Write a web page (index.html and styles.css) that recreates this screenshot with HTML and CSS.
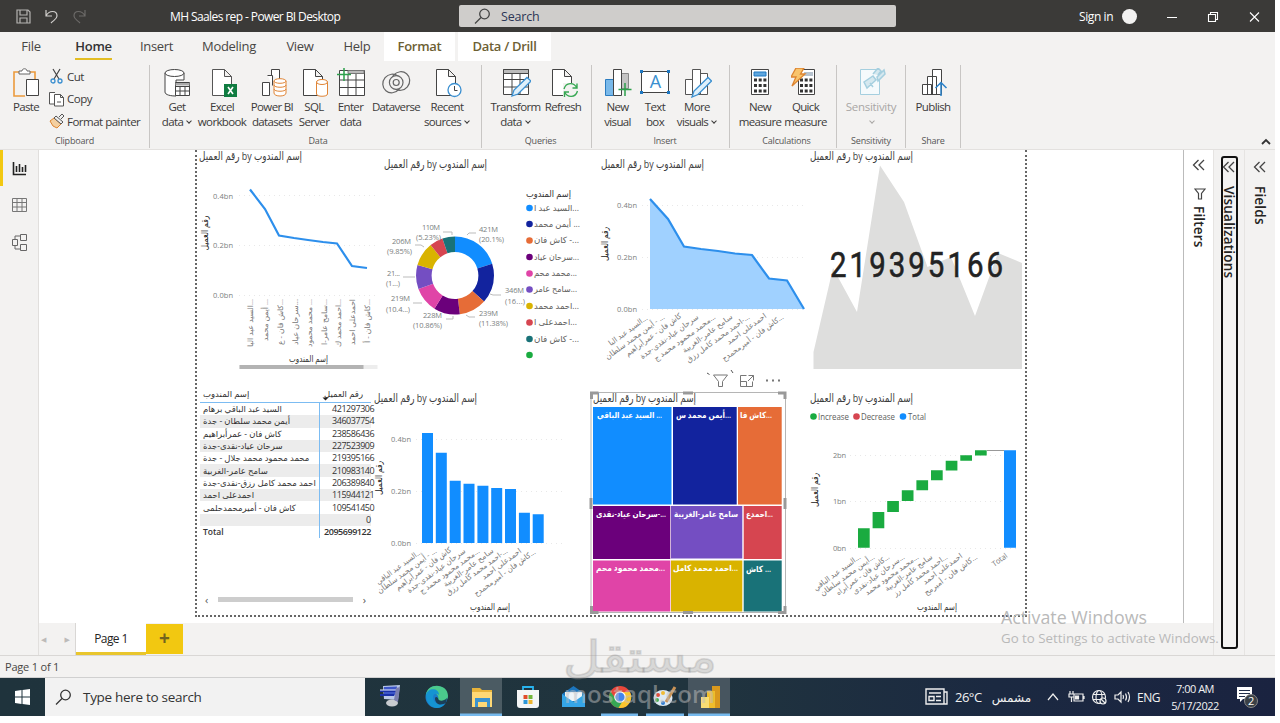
FILE: index.html
```
<!DOCTYPE html>
<html lang="en">
<head>
    <meta charset="UTF-8">
    <meta name="viewport" content="width=device-width, initial-scale=1.0">
    <title>MH Saales rep - Power BI Desktop</title>
    <link rel="stylesheet" href="styles.css">
</head>
<body>
    <div class="desktop">
        <header class="titlebar">
            <div class="quick-access">
                <svg width="100" height="32" viewBox="0 0 100 32" fill="none" stroke="#b5b3b1" stroke-width="1.2">
                    <path d="M17 10h11l2 2v11H17zM20 10v5h7v-5M20 23v-5h7v5"/>
                    <path d="M46 10v6h6M46 16c3-6 11-6 11 0 0 3-3 4-6 7" stroke="#d0cecc"/>
                    <path d="M85 10v6h-6M85 16c-3-6-11-6-11 0 0 3 3 4 6 7" stroke="#6c6a68"/>
                </svg>
            </div>
            <div class="app-title">MH Saales rep - Power BI Desktop</div>
            <div class="search-box">
                <svg width="17" height="17" viewBox="0 0 17 17" fill="none" stroke="#444" stroke-width="1.3"><circle cx="10.5" cy="6" r="4.8"/><path d="M7 9.5L1 15.5"/></svg>
                <span>Search</span>
            </div>
            <div class="sign-in">Sign in</div>
            <div class="avatar"></div>
            <svg class="window-buttons" width="120" height="32" viewBox="1155 0 120 32" fill="none" stroke="#fff" stroke-width="1.1">
                <path d="M1167 17.5h10M1250 12.500l9 9M1259 12.500l-9 9"/>
                <path d="M1208.500 14.500h7v7h-7zM1210.500 14.500v-2h7v7h-2"/>
            </svg>
        </header>

        <nav class="tabs">
            <span class="tab w-file">File</span>
            <span class="tab w-home active"><b>Home</b></span>
            <span class="tab w-insert">Insert</span>
            <span class="tab w-modeling">Modeling</span>
            <span class="tab w-view">View</span>
            <span class="tab w-help">Help</span>
            <span class="tab context w-format">Format</span>
            <span class="tab context w-drill">Data / Drill</span>
        </nav>

        <section class="ribbon">
            <div class="group g-clipboard">
                <div class="tools">
                    <div class="tool w52">
                        <svg width="30" height="30" viewBox="0 0 30 30" fill="none"><path d="M8 4H3v24h11M19 4h5v7" stroke="#ec9a3c" stroke-width="1.6"/><path d="M8 6V3h3c0-3 5-3 5 0h3v3z" fill="#fff" stroke="#666"/><path d="M15.500 11.500h12v16h-12z" fill="#fff" stroke="#444"/></svg>
                        <span>Paste</span>
                    </div>
                    <div class="small-tools">
                        <div><svg width="16" height="16" viewBox="0 0 16 16" fill="none"><path d="M4 1l6 10M11 1L5 11" stroke="#444" stroke-width="1.200"/><circle cx="4" cy="13" r="2" stroke="#3a8fd0" stroke-width="1.300"/><circle cx="11" cy="13" r="2" stroke="#3a8fd0" stroke-width="1.300"/></svg>Cut</div>
                        <div><svg width="16" height="16" viewBox="0 0 16 16" fill="#fff" stroke="#555"><path d="M6 13H.5V1.500H6"/><path d="M5.500 3.500h6l3 3v8.500h-9zM11.500 3.500v3h3M8 11h4"/></svg>Copy</div>
                        <div><svg width="16" height="16" viewBox="0 0 16 16"><path d="M1 8l4-3 7 6-4 4-4-2z" fill="#f3cfa0" stroke="#dd8430"/><path d="M5 5l2-2 7 6-2 2zM10 4l3-3 2 2-3 3" fill="#eee" stroke="#555"/></svg>Format painter</div>
                    </div>
                </div>
                <div class="caption">Clipboard</div>
            </div>

            <div class="group g-data">
                <div class="tools">
                    <div class="tool w44">
                        <svg width="30" height="30" viewBox="0 0 30 30" fill="#fff" stroke="#444"><path d="M3 5v19c0 3 6 4 11 4V12h8V5"/><ellipse cx="12.500" cy="5" rx="9.500" ry="3.500"/><path d="M13.500 14.500h14v13h-14zM13.500 18.500h14M13.500 23h14M18 18v10M23 18v10"/><path d="M13.500 15h14v2.500h-14z" fill="#aaa" stroke="none"/></svg>
                        <span>Get<br>data<i class="chev"></i></span>
                    </div>
                    <div class="tool w46">
                        <svg width="30" height="30" viewBox="0 0 30 30" fill="#fff" stroke="#555"><path d="M5.500 1.500h12l7 7v19h-19zM17.500 1.500v7h7"/><path d="M17 16h13v13H17z" fill="#107c41" stroke="none"/><path d="M21 19l5 7M26 19l-5 7" stroke="#fff" stroke-width="1.600"/></svg>
                        <span>Excel<br>workbook</span>
                    </div>
                    <div class="tool w54">
                        <svg width="30" height="30" viewBox="0 0 30 30" fill="#fff" stroke="#444"><path d="M5.500 14.500h7v13h-7zM10.500 7.500h5v10M14.500 7V1.500h8V12"/><path d="M17 13v12c0 4 12 4 12 0V13z" stroke="#e08536"/><ellipse cx="23" cy="13" rx="6" ry="2.300" stroke="#e08536"/><path d="M17 17c0 3 12 3 12 0M17 21c0 3 12 3 12 0" stroke="#e08536" fill="none"/></svg>
                        <span>Power BI<br>datasets</span>
                    </div>
                    <div class="tool w30">
                        <svg width="30" height="30" viewBox="0 0 30 30" fill="#fff" stroke="#444"><path d="M4.500 1.500h12l7 7v19h-19zM16.500 1.500v7h7"/><path d="M17.500 14v12c0 3 11 3 11 0V14z" stroke="#e08536"/><ellipse cx="23" cy="14" rx="5.500" ry="2.500" stroke="#e08536"/></svg>
                        <span>SQL<br>Server</span>
                    </div>
                    <div class="tool w43">
                        <svg width="30" height="30" viewBox="0 0 30 30" fill="#fff" stroke="#444"><path d="M3.500 2.500h25v25h-25zM3.500 12h25M3.500 19.500h25M12 6v21M20 6v21"/><path d="M12 2.500h16v3H12z" fill="#bbb" stroke="#777"/><path d="M8 0v13M1 6.500h14" stroke="#2da04b" stroke-width="1.500"/></svg>
                        <span>Enter<br>data</span>
                    </div>
                    <div class="tool w48">
                        <svg width="30" height="30" viewBox="0 0 30 30" fill="none" stroke="#666" stroke-width="1.200"><ellipse cx="11" cy="15.500" rx="9.500" ry="9" transform="rotate(-50 11 15.500)"/><ellipse cx="19.500" cy="13" rx="9.500" ry="9" transform="rotate(-50 19.500 13)"/><circle cx="15.200" cy="14.500" r="6.800" fill="#f3f2f1"/><circle cx="15.200" cy="14.500" r="3"/></svg>
                        <span>Dataverse</span>
                    </div>
                    <div class="tool w54">
                        <svg width="30" height="30" viewBox="0 0 30 30" fill="#fff" stroke="#444"><path d="M4.500 1.500h12l7 7v19h-19zM16.500 1.500v7h7"/><circle cx="22.500" cy="22" r="6.500" stroke="#3a8fd0" stroke-width="1.300"/><path d="M22.500 18v4.500h3" fill="none"/></svg>
                        <span>Recent<br>sources<i class="chev"></i></span>
                    </div>
                </div>
                <div class="caption">Data</div>
            </div>

            <div class="group g-queries">
                <div class="tools">
                    <div class="tool w51">
                        <svg width="30" height="30" viewBox="0 0 30 30" fill="#fff" stroke="#444"><path d="M2.500 1.500h25v25h-25zM2.500 11.500h25M2.500 19h25M11 5v21M19 5v21"/><path d="M2.500 1.500h25v4h-25z" fill="#bbb"/><path d="M11 28l2-6L26 9.500l4 3.500L17 26z" fill="#dff0fb" stroke="#3a8fd0" stroke-width="1.300"/></svg>
                        <span>Transform<br>data<i class="chev"></i></span>
                    </div>
                    <div class="tool w44">
                        <svg width="30" height="30" viewBox="0 0 30 30" fill="#fff" stroke="#444"><path d="M4.500 1.500h12l7 7v19h-19zM16.500 1.500v7h7"/><path d="M15 15h15v15H15z" fill="#f3f2f1" stroke="none"/><path d="M16 21c2-7 10-7 13-1M29 15.500V20h-4.500M29.500 23c-2 7-10 7-13 1M16.500 29v-5H21" fill="none" stroke="#37a853" stroke-width="1.400"/></svg>
                        <span>Refresh</span>
                    </div>
                </div>
                <div class="caption">Queries</div>
            </div>

            <div class="group g-insert">
                <div class="tools">
                    <div class="tool w33">
                        <svg width="30" height="30" viewBox="0 0 30 30" fill="#fff"><path d="M2.500 11.500h8v16h-8z" fill="#79b9ea" stroke="#2b7cc0"/><path d="M18.500 5.500h7v15h-7z" fill="#c4c4c4" stroke="#888"/><path d="M10.500 1.500h8v26h-8z" stroke="#444"/><path d="M22 15v13M15.500 21.500h13" stroke="#2da04b" stroke-width="1.500"/></svg>
                        <span>New<br>visual</span>
                    </div>
                    <div class="tool w42">
                        <svg width="30" height="30" viewBox="0 0 30 30"><path d="M1.500 3.500h27v21h-27z" fill="#fff" stroke="#444"/><path d="M0 2h3v3H0zM27 2h3v3h-3zM0 23h3v3H0zM27 23h3v3h-3z" fill="#1e78c2"/><text x="15" y="20" text-anchor="middle" font-size="18" fill="#3a8fd0">A</text></svg>
                        <span>Text<br>box</span>
                    </div>
                    <div class="tool w42">
                        <svg width="30" height="30" viewBox="0 0 30 30" fill="#fff" stroke="#555"><path d="M3.500 11.500h7v15h-7zM18.500 5.500h7v21h-7zM10.500 1.500h8v25h-8z"/><path d="M10 29l2-6L26 9.500l3.500 3.500L16 26.500z" fill="#dff0fb" stroke="#3a8fd0" stroke-width="1.300"/></svg>
                        <span>More<br>visuals<i class="chev"></i></span>
                    </div>
                </div>
                <div class="caption">Insert</div>
            </div>

            <div class="group g-calc">
                <div class="tools">
                    <div class="tool w46">
                        <svg width="30" height="30" viewBox="0 0 30 30"><path d="M6.500 1.500h17v25h-17z" fill="#fff" stroke="#444"/><path d="M9 4h12v4H9z" fill="#5ea6de" stroke="#1e78c2"/><path d="M9 12h12.500M9 17.500h12.500M9 23h12.500" stroke="#333" stroke-width="3" stroke-dasharray="3 1.700"/></svg>
                        <span>New<br>measure</span>
                    </div>
                    <div class="tool w45">
                        <svg width="30" height="30" viewBox="0 0 30 30"><path d="M7.500 1.500h16v25h-16z" fill="#fff" stroke="#444"/><path d="M13 4h9v4h-9z" fill="#b7c3cf"/><path d="M9 12h12.500M9 17.500h12.500M9 23h12.500" stroke="#333" stroke-width="3" stroke-dasharray="3 1.700"/><path d="M5 0h8L9.500 6H14L1 18l4-9H0z" fill="#f8c46c" stroke="#dd8430" stroke-width="1.300"/></svg>
                        <span>Quick<br>measure</span>
                    </div>
                </div>
                <div class="caption">Calculations</div>
            </div>

            <div class="group g-sens">
                <div class="tools">
                    <div class="tool w68 disabled">
                        <svg width="30" height="30" viewBox="0 0 30 30" fill="#f5fafc" stroke="#a5cfdf"><path d="M4.500 1.500h19v25h-19z"/><path d="M8 14l9-6 3 4-9 8zM17 6l5-6 3 3-3 4M21 9l7-7 1 4-7 7zM14 15l3 4" fill="#d5e8ef" stroke-width="1.500"/></svg>
                        <span>Sensitivity<br><i class="chev"></i></span>
                    </div>
                </div>
                <div class="caption">Sensitivity</div>
            </div>

            <div class="group g-share">
                <div class="tools">
                    <div class="tool w54">
                        <svg width="30" height="30" viewBox="0 0 30 30" fill="#fff" stroke="#444"><path d="M14.500 1.500h9v25h-9zM9.500 8.500h9v18h-9zM4.500 16.500h9v10h-9z"/><path d="M23 28V15M17.500 20l5.500-5.500 5.500 5.500" stroke="#2b82c9" fill="none" stroke-width="1.500"/></svg>
                        <span>Publish</span>
                    </div>
                </div>
                <div class="caption">Share</div>
            </div>
            <svg class="collapse" width="10" height="7" viewBox="0 0 10 7" fill="none" stroke="#333" stroke-width="1.800"><path d="M1 6l4-4 4 4"/></svg>
        </section>

        <main class="workspace">
            <aside class="rail">
                <svg width="38" height="120" viewBox="0 150 38 120" fill="none">
                    <path d="M0 150h3v36H0z" fill="#f2c811"/>
                    <path d="M13.500 162v12.500H26M16.500 166v6M19.500 164v8M22.500 167v5M25.500 165v7" stroke="#222" stroke-width="1.600"/>
                    <path d="M12.500 198.500h14v13h-14zM12.500 202.500h14M12.500 207h14M17 199v12M22 199v12" stroke="#777"/>
                    <path d="M12.500 239.500h5v6h-5zM20.500 234.500h6v6h-6zM20.500 244.500h6v6h-6zM15 239v-3h5M15 246v3h5" stroke="#666"/>
                </svg>
            </aside>

            <div class="editor">
                <div class="canvas">
                    <div class="report">
                        <div class="report-row top">
                            <!-- line chart -->
                            <svg class="visual" width="184" height="230" viewBox="196 150 184 230">
                                <text class="title" x="199" y="160" textLength="103" lengthAdjust="spacingAndGlyphs">رقم العميل by إسم المندوب</text>
                                <path class="grid" d="M239 195.500h137M239 245.500h137M239 295.500h137"/>
                                <text class="axis" x="213" y="199" textLength="20">0.4bn</text>
                                <text class="axis" x="213" y="248" textLength="20">0.2bn</text>
                                <text class="axis" x="213" y="298" textLength="20">0.0bn</text>
                                <text class="axis-title" transform="translate(208 233) rotate(-90)" text-anchor="middle" textLength="35" lengthAdjust="spacingAndGlyphs">رقم العميل</text>
                                <path d="M250 189.500L265 209L279 235.500L294 238L308 240L323 242L337 243.500L352 266L367 268" fill="none" stroke="#2d8fec" stroke-width="2.200"/>
                                <g class="cat" text-anchor="end">
                                    <text transform="translate(253 299) rotate(-90)" textLength="48" lengthAdjust="spacingAndGlyphs">السيد عبد البا...</text>
                                    <text transform="translate(268 299) rotate(-90)" textLength="42" lengthAdjust="spacingAndGlyphs">أيمن محمد ...</text>
                                    <text transform="translate(283 299) rotate(-90)" textLength="46" lengthAdjust="spacingAndGlyphs">كاش فان - ع...</text>
                                    <text transform="translate(298 299) rotate(-90)" textLength="46" lengthAdjust="spacingAndGlyphs">سرحان عياد...</text>
                                    <text transform="translate(312 299) rotate(-90)" textLength="48" lengthAdjust="spacingAndGlyphs">محمد محمود ...</text>
                                    <text transform="translate(327 299) rotate(-90)" textLength="46" lengthAdjust="spacingAndGlyphs">سامح عامر-ا...</text>
                                    <text transform="translate(341 299) rotate(-90)" textLength="48" lengthAdjust="spacingAndGlyphs">احمد محمد ك...</text>
                                    <text transform="translate(355 299) rotate(-90)" textLength="46" lengthAdjust="spacingAndGlyphs">احمدعلى احمد</text>
                                    <text transform="translate(370 299) rotate(-90)" textLength="44" lengthAdjust="spacingAndGlyphs">كاش فان - أ...</text>
                                </g>
                                <text class="label" x="289" y="362" textLength="39" lengthAdjust="spacingAndGlyphs">إسم المندوب</text>
                                <path d="M239.500 365h138v4h-138z" fill="#ededed"/><path d="M239.500 365h124v4h-124z" fill="#b3b3b3"/>
                            </svg>

                            <!-- donut -->
                            <svg class="visual" width="210" height="230" viewBox="380 150 210 230">
                                <text class="title" x="384" y="168" textLength="103" lengthAdjust="spacingAndGlyphs">رقم العميل by إسم المندوب</text>
                                <g transform="rotate(-90 455 275.500)" fill="none" stroke-width="15.600">
                                    <circle cx="455" cy="275.500" r="31.200" pathLength="100" stroke="#118dff" stroke-dasharray="20.100 100"/>
                                    <circle cx="455" cy="275.500" r="31.200" pathLength="100" stroke="#12239e" stroke-dasharray="16.510 100" stroke-dashoffset="-20.100"/>
                                    <circle cx="455" cy="275.500" r="31.200" pathLength="100" stroke="#e66c37" stroke-dasharray="11.380 100" stroke-dashoffset="-36.610"/>
                                    <circle cx="455" cy="275.500" r="31.200" pathLength="100" stroke="#6b007b" stroke-dasharray="10.860 100" stroke-dashoffset="-47.990"/>
                                    <circle cx="455" cy="275.500" r="31.200" pathLength="100" stroke="#e044a7" stroke-dasharray="10.470 100" stroke-dashoffset="-58.850"/>
                                    <circle cx="455" cy="275.500" r="31.200" pathLength="100" stroke="#744ec2" stroke-dasharray="10.070 100" stroke-dashoffset="-69.320"/>
                                    <circle cx="455" cy="275.500" r="31.200" pathLength="100" stroke="#d9b300" stroke-dasharray="9.850 100" stroke-dashoffset="-79.390"/>
                                    <circle cx="455" cy="275.500" r="31.200" pathLength="100" stroke="#d64550" stroke-dasharray="5.530 100" stroke-dashoffset="-89.240"/>
                                    <circle cx="455" cy="275.500" r="31.200" pathLength="100" stroke="#197278" stroke-dasharray="5.230 100" stroke-dashoffset="-94.770"/>
                                </g>
                                <path d="M467 235l2-2h7M490 294l3 1h8M466 315l3 2h6M453 316v3h-7M422 303h-9M415 277h-12M424 247l-3-2h-6M452 235v-3h-9" fill="none" stroke="#bbb"/>
                                <g class="axis">
                                    <text x="479" y="232" textLength="19">421M</text><text x="479" y="242" textLength="25">(20.1%)</text>
                                    <text x="505" y="293" textLength="19">346M</text><text x="505" y="304" textLength="20">(16...)</text>
                                    <text x="479" y="316" textLength="19">239M</text><text x="479" y="326" textLength="29">(11.38%)</text>
                                    <text x="423" y="318" textLength="19">228M</text><text x="413" y="328" textLength="29">(10.86%)</text>
                                    <text x="391" y="301" textLength="19">219M</text><text x="386" y="312" textLength="24">(10.4...)</text>
                                    <text x="387" y="276" textLength="13">21...</text><text x="386" y="286" textLength="14">(1...)</text>
                                    <text x="392" y="244" textLength="19">206M</text><text x="387" y="254" textLength="25">(9.85%)</text>
                                    <text x="422" y="230" textLength="18">110M</text><text x="416" y="240" textLength="25">(5.23%)</text>
                                </g>
                                <text class="label" x="526" y="197" textLength="45" lengthAdjust="spacingAndGlyphs">إسم المندوب</text>
                                <g>
                                    <circle cx="529.500" cy="208" r="3.300" fill="#118dff"/><circle cx="529.500" cy="224" r="3.300" fill="#12239e"/>
                                    <circle cx="529.500" cy="240.500" r="3.300" fill="#e66c37"/><circle cx="529.500" cy="257" r="3.300" fill="#6b007b"/>
                                    <circle cx="529.500" cy="273.500" r="3.300" fill="#e044a7"/><circle cx="529.500" cy="289.500" r="3.300" fill="#744ec2"/>
                                    <circle cx="529.500" cy="306" r="3.300" fill="#d9b300"/><circle cx="529.500" cy="322.500" r="3.300" fill="#d64550"/>
                                    <circle cx="529.500" cy="339" r="3.300" fill="#197278"/><circle cx="529.500" cy="355" r="3.300" fill="#1aab40"/>
                                </g>
                                <g class="legend">
                                    <text x="534" y="211" textLength="45" lengthAdjust="spacingAndGlyphs">السيد عبد ا...</text>
                                    <text x="534" y="227" textLength="46" lengthAdjust="spacingAndGlyphs">أيمن محمد ...</text>
                                    <text x="534" y="243" textLength="45" lengthAdjust="spacingAndGlyphs">كاش  فان -...</text>
                                    <text x="534" y="260" textLength="45" lengthAdjust="spacingAndGlyphs">سرحان عياد...</text>
                                    <text x="534" y="276" textLength="43" lengthAdjust="spacingAndGlyphs">محمد محم...</text>
                                    <text x="534" y="292" textLength="43" lengthAdjust="spacingAndGlyphs">سامح عامر...</text>
                                    <text x="534" y="309" textLength="45" lengthAdjust="spacingAndGlyphs">احمد محمد...</text>
                                    <text x="534" y="325" textLength="43" lengthAdjust="spacingAndGlyphs">احمدعلى ا...</text>
                                    <text x="534" y="342" textLength="45" lengthAdjust="spacingAndGlyphs">كاش  فان -...</text>
                                </g>
                            </svg>

                            <!-- area chart -->
                            <svg class="visual" width="218" height="230" viewBox="590 150 218 230">
                                <text class="title" x="601" y="168" textLength="103" lengthAdjust="spacingAndGlyphs">رقم العميل by إسم المندوب</text>
                                <path class="grid" d="M642 205.500h164M642 257.500h164M642 309.500h164"/>
                                <text class="axis" x="617" y="208" textLength="20">0.4bn</text>
                                <text class="axis" x="617" y="260" textLength="20">0.2bn</text>
                                <text class="axis" x="617" y="312" textLength="20">0.0bn</text>
                                <text class="axis-title" transform="translate(608 244) rotate(-90)" text-anchor="middle" textLength="34" lengthAdjust="spacingAndGlyphs">رقم العميل</text>
                                <path d="M650 309V199L668 219L684 246.500L701 249L718 251L735 253.500L752 255L769 278.500L787 280.500L804 309z" fill="#a0d1ff"/>
                                <path d="M650 199L668 219L684 246.500L701 249L718 251L735 253.500L752 255L769 278.500L787 280.500L804 309" fill="none" stroke="#2d8fec" stroke-width="2.200"/>
                                <g class="cat" text-anchor="end">
                                    <text transform="translate(648 319) rotate(-36)" textLength="46" lengthAdjust="spacingAndGlyphs">السيد عبد البا...</text>
                                    <text transform="translate(665 318) rotate(-36)" textLength="71" lengthAdjust="spacingAndGlyphs">أيمن محمد سلطان - ...</text>
                                    <text transform="translate(682 317) rotate(-36)" textLength="67" lengthAdjust="spacingAndGlyphs">كاش فان - عمرأبراهيم</text>
                                    <text transform="translate(699 318) rotate(-36)" textLength="70" lengthAdjust="spacingAndGlyphs">سرحان عياد-نقدى-جدة</text>
                                    <text transform="translate(716 318) rotate(-36)" textLength="74" lengthAdjust="spacingAndGlyphs">محمد محمود محمد ج...</text>
                                    <text transform="translate(733 318) rotate(-36)" textLength="60" lengthAdjust="spacingAndGlyphs">سامح عامر-الغربية</text>
                                    <text transform="translate(750 318) rotate(-36)" textLength="76" lengthAdjust="spacingAndGlyphs">احمد محمد كامل رزق-...</text>
                                    <text transform="translate(767 317) rotate(-36)" textLength="47" lengthAdjust="spacingAndGlyphs">احمدعلى احمد</text>
                                    <text transform="translate(784 318) rotate(-36)" textLength="74" lengthAdjust="spacingAndGlyphs">كاش فان - أميرمحمدح...</text>
                                </g>
                            </svg>

                            <!-- KPI card -->
                            <svg class="visual" width="216" height="230" viewBox="808 150 216 230">
                                <text class="title" x="810" y="160" textLength="103" lengthAdjust="spacingAndGlyphs">رقم العميل by إسم المندوب</text>
                                <path d="M813.500 369V352L833 268L857 312L880 165.500L904 202L927.500 267L951 257L975 316L998 253L1022 263V369z" fill="#dededd"/>
                                <text class="kpi" transform="translate(830 277) scale(.84 1)" textLength="206">219395166</text>
                            </svg>
                        </div>

                        <div class="report-row">
                            <div class="table-visual">
                                <table>
                                    <thead><tr><th>إسم المندوب</th><th class="num">رقم العميل</th></tr></thead>
                                    <tbody>
                                        <tr><td>السيد عبد الباقي برهام</td><td class="num">421297306</td></tr>
                                        <tr><td>أيمن محمد سلطان - جدة</td><td class="num">346037754</td></tr>
                                        <tr><td>كاش فان - عمرأبراهيم</td><td class="num">238586436</td></tr>
                                        <tr><td>سرحان عياد-نقدى-جدة</td><td class="num">227523909</td></tr>
                                        <tr><td>محمد محمود محمد جلال - جدة</td><td class="num">219395166</td></tr>
                                        <tr><td>سامح عامر-الغربية</td><td class="num">210983140</td></tr>
                                        <tr><td>احمد محمد كامل رزق-نقدى-جدة</td><td class="num">206389840</td></tr>
                                        <tr><td>احمدعلى احمد</td><td class="num">115944121</td></tr>
                                        <tr><td>كاش فان - أميرمحمدحلمى</td><td class="num">109541450</td></tr>
                                        <tr><td></td><td class="num zero">0</td></tr>
                                        <tr class="total"><td>Total</td><td class="num">2095699122</td></tr>
                                    </tbody>
                                </table>
                                <div class="hscroll"><span>‹</span><div></div><span>›</span></div>
                            </div>

                            <!-- column chart -->
                            <svg class="visual" width="217" height="234" viewBox="373 380 217 234">
                                <path d="M322.500 397.500h6l-3 3z" fill="#222"/>
                                <text class="title" x="374" y="402" textLength="103" lengthAdjust="spacingAndGlyphs">رقم العميل by إسم المندوب</text>
                                <path class="grid" d="M416 439.500h146M416 491.500h146M416 543.500h146"/>
                                <text class="axis" x="391" y="442" textLength="20">0.4bn</text>
                                <text class="axis" x="391" y="494" textLength="20">0.2bn</text>
                                <text class="axis" x="391" y="546" textLength="20">0.0bn</text>
                                <text class="axis-title" transform="translate(382 478) rotate(-90)" text-anchor="middle" textLength="34" lengthAdjust="spacingAndGlyphs">رقم العميل</text>
                                <path d="M422 433h11v110h-11zM435.800 452.700h11V543h-11zM449.700 480.700h11V543h-11zM463.500 483.700h11V543h-11zM477.400 485.700h11V543h-11zM491.200 488h11V543h-11zM505 489h11V543h-11zM518.900 512.700h11V543h-11zM532.700 514.300h11V543h-11z" fill="#118dff"/>
                                <g class="cat" text-anchor="end">
                                    <text transform="translate(422 553) rotate(-36)" textLength="54" lengthAdjust="spacingAndGlyphs">السيد عبد الباقي...</text>
                                    <text transform="translate(437 552) rotate(-36)" textLength="71" lengthAdjust="spacingAndGlyphs">أيمن محمد سلطان - ...</text>
                                    <text transform="translate(452 551) rotate(-36)" textLength="67" lengthAdjust="spacingAndGlyphs">كاش فان - عمرأبراهيم</text>
                                    <text transform="translate(466 552) rotate(-36)" textLength="70" lengthAdjust="spacingAndGlyphs">سرحان عياد-نقدى-جدة</text>
                                    <text transform="translate(480 552) rotate(-36)" textLength="72" lengthAdjust="spacingAndGlyphs">محمد محمود محمد ج...</text>
                                    <text transform="translate(494 552) rotate(-36)" textLength="60" lengthAdjust="spacingAndGlyphs">سامح عامر-الغربية</text>
                                    <text transform="translate(508 552) rotate(-36)" textLength="74" lengthAdjust="spacingAndGlyphs">احمد محمد كامل رزق-...</text>
                                    <text transform="translate(522 552) rotate(-36)" textLength="47" lengthAdjust="spacingAndGlyphs">احمدعلى احمد</text>
                                    <text transform="translate(536 553) rotate(-36)" textLength="74" lengthAdjust="spacingAndGlyphs">كاش فان - أميرمحمدح...</text>
                                </g>
                                <text class="label" x="470" y="610" textLength="40" lengthAdjust="spacingAndGlyphs">إسم المندوب</text>
                            </svg>

                            <!-- treemap, selected -->
                            <svg class="visual" width="218" height="236" viewBox="590 380 218 236">
                                <text class="title" x="593" y="402" textLength="103" lengthAdjust="spacingAndGlyphs">رقم العميل by إسم المندوب</text>
                                <path d="M593 407h78.500v97.500H593z" fill="#118dff"/>
                                <path d="M673 407h63.700v97.500H673z" fill="#12239e"/>
                                <path d="M738 407h43.700v97.500H738z" fill="#e66c37"/>
                                <path d="M593 506h77.300v53H593z" fill="#6b007b"/>
                                <path d="M671 506h71.300v52.500H671z" fill="#744ec2"/>
                                <path d="M743.700 506h38v53h-38z" fill="#d64550"/>
                                <path d="M593 560.500h77.300v51H593z" fill="#e044a7"/>
                                <path d="M671 560.500h71.300v51H671z" fill="#d9b300"/>
                                <path d="M743.700 560.500h38v51h-38z" fill="#197278"/>
                                <g class="tile">
                                    <text x="597" y="418" textLength="65" lengthAdjust="spacingAndGlyphs">السيد عبد الباقي ...</text>
                                    <text x="676" y="418" textLength="55" lengthAdjust="spacingAndGlyphs">أيمن محمد س...</text>
                                    <text x="740" y="418" textLength="32" lengthAdjust="spacingAndGlyphs">كاش فا...</text>
                                    <text x="596" y="517" textLength="70" lengthAdjust="spacingAndGlyphs">سرحان عياد-نقدى-...</text>
                                    <text x="674" y="517" textLength="64" lengthAdjust="spacingAndGlyphs">سامح عامر-الغربية</text>
                                    <text x="746" y="517" textLength="27" lengthAdjust="spacingAndGlyphs">احمدع...</text>
                                    <text x="596" y="571" textLength="69" lengthAdjust="spacingAndGlyphs">محمد محمود محم...</text>
                                    <text x="673" y="571" textLength="65" lengthAdjust="spacingAndGlyphs">احمد محمد كامل...</text>
                                    <text x="746" y="572" textLength="25" lengthAdjust="spacingAndGlyphs">كاش ...</text>
                                </g>
                                <path d="M591 392.500h194.500v220H591z" fill="none" stroke="#b5b5b5"/>
                                <path d="M591.500 399v-6h7M683 393h10M778 393h7v6M591 498v11M785 498v11M591.500 606v6.500h7M683 612.500h10M778 612.500h7V606" fill="none" stroke="#999" stroke-width="3"/>
                                <g fill="none" stroke="#777">
                                    <path d="M713.500 375h14l-5 6.500v5h-4v-5z"/>
                                    <path d="M746.500 375.500h-6v11h12v-5M740.500 381.500h6v5M748.500 375.500h5v5M753.500 375.500l-5.500 5.500"/>
                                    <path d="M766 380.500h2M772 380.500h2M778 380.500h2" stroke-width="2"/>
                                    <path d="M707 373l2.500 1.500M731 370l2 3" stroke="#555"/>
                                </g>
                            </svg>

                            <!-- waterfall -->
                            <svg class="visual" width="216" height="234" viewBox="808 380 216 234">
                                <text class="title" x="810" y="402" textLength="103" lengthAdjust="spacingAndGlyphs">رقم العميل by إسم المندوب</text>
                                <circle cx="813.500" cy="416.500" r="3.300" fill="#1aab40"/><circle cx="856.500" cy="416.500" r="3.300" fill="#d64550"/><circle cx="903" cy="416.500" r="3.300" fill="#118dff"/>
                                <g class="legend">
                                    <text x="818" y="420" textLength="31" lengthAdjust="spacingAndGlyphs">Increase</text>
                                    <text x="861" y="420" textLength="34" lengthAdjust="spacingAndGlyphs">Decrease</text>
                                    <text x="908" y="420" textLength="18" lengthAdjust="spacingAndGlyphs">Total</text>
                                </g>
                                <path class="grid" d="M850 455.500h168M850 501.500h168M850 548.500h168"/>
                                <text class="axis" x="833" y="458" textLength="13">2bn</text>
                                <text class="axis" x="833" y="504" textLength="13">1bn</text>
                                <text class="axis" x="833" y="551" textLength="13">0bn</text>
                                <text class="axis-title" transform="translate(818 490) rotate(-90)" text-anchor="middle" textLength="34" lengthAdjust="spacingAndGlyphs">رقم العميل</text>
                                <path d="M858 528.300h11.700v19.500H858zM872.600 512h11.700v16.300h-11.700zM887.200 501h11.700v11h-11.700zM901.800 490.300h11.700V501h-11.700zM916.400 480.300h11.700v10h-11.700zM931 470.300h11.700v10H931zM945.700 460.700h11.700v9.700h-11.700zM960.300 455.300H972v5.400h-11.700zM975 450.300h11.700v5.200H975z" fill="#1aab40"/>
                                <path d="M987 450.500h17" stroke="#999"/>
                                <path d="M1004 450.300h12v97.500h-12z" fill="#118dff"/>
                                <g class="cat" text-anchor="end">
                                    <text transform="translate(861 558) rotate(-36)" textLength="56" lengthAdjust="spacingAndGlyphs">السيد عبد الباقي...</text>
                                    <text transform="translate(875 558) rotate(-36)" textLength="65" lengthAdjust="spacingAndGlyphs">أيمن محمد سلطان...</text>
                                    <text transform="translate(890 558) rotate(-36)" textLength="64" lengthAdjust="spacingAndGlyphs">كاش فان - عمرأبراه...</text>
                                    <text transform="translate(905 558) rotate(-36)" textLength="62" lengthAdjust="spacingAndGlyphs">سرحان عياد-نقدى...</text>
                                    <text transform="translate(919 558) rotate(-36)" textLength="64" lengthAdjust="spacingAndGlyphs">محمد محمود محمد...</text>
                                    <text transform="translate(933 558) rotate(-36)" textLength="57" lengthAdjust="spacingAndGlyphs">سامح عامر-الغربية</text>
                                    <text transform="translate(948 558) rotate(-36)" textLength="65" lengthAdjust="spacingAndGlyphs">احمد محمد كامل رز...</text>
                                    <text transform="translate(963 557) rotate(-36)" textLength="47" lengthAdjust="spacingAndGlyphs">احمدعلى احمد</text>
                                    <text transform="translate(978 558) rotate(-36)" textLength="64" lengthAdjust="spacingAndGlyphs">كاش فان - أميرمح...</text>
                                    <text transform="translate(1008 557) rotate(-36)" textLength="17">Total</text>
                                </g>
                                <text class="label" x="917" y="610" textLength="40" lengthAdjust="spacingAndGlyphs">إسم المندوب</text>
                            </svg>
                        </div>
                    </div>
                </div>
                <div class="page-tabs">
                    <div class="arrows"><span>◀</span><span>▶</span></div>
                    <div class="page-tab">Page 1</div>
                    <div class="add-page">+</div>
                </div>
            </div>

            <aside class="pane filters">
                <svg width="14" height="12" viewBox="0 0 14 12" fill="none" stroke="#444" stroke-width="1.300"><path d="M6.500 1L1.500 6l5 5M12 1L7 6l5 5"/></svg>
                <svg class="funnel" width="12" height="12" viewBox="0 0 12 12" fill="none" stroke="#444" stroke-width="1.200"><path d="M1 1h10L7.500 5.500v5.500h-3V5.500z"/></svg>
                <span>Filters</span>
            </aside>
            <aside class="pane visualizations">
                <div class="focus-ring">
                    <svg width="14" height="12" viewBox="0 0 14 12" fill="none" stroke="#444" stroke-width="1.300"><path d="M6.500 1L1.500 6l5 5M12 1L7 6l5 5"/></svg>
                    <span>Visualizations</span>
                </div>
            </aside>
            <aside class="pane fields">
                <svg width="14" height="12" viewBox="0 0 14 12" fill="none" stroke="#444" stroke-width="1.300"><path d="M6.500 1L1.500 6l5 5M12 1L7 6l5 5"/></svg>
                <span>Fields</span>
            </aside>
        </main>

        <div class="status">Page 1 of 1</div>

        <footer class="taskbar">
            <div class="start"><svg width="15" height="16" viewBox="0 0 15 16" fill="#fff"><path d="M0 2l6.500-1v6.500H0zM7.500 1L15 0v7.500H7.500zM0 8.500h6.500V15L0 14zM7.500 8.500H15V16l-7.500-1z"/></svg></div>
            <div class="task-search">
                <svg width="17" height="17" viewBox="0 0 17 17" fill="none" stroke="#333" stroke-width="1.300"><circle cx="10.500" cy="6" r="4.800"/><path d="M7 9.500L1 15.500"/></svg>
                <span>Type here to search</span>
            </div>
            <svg class="apps" width="375" height="38" viewBox="365 678 375 38">
                <path d="M460 678h42v38h-42z" fill="#4b5b63"/><path d="M688 678h42v38h-42z" fill="#47555f"/>
                <path d="M460 713.500h42v2.500h-42zM601 713.500h37v2.500h-37zM646 713.500h38v2.500h-38zM688 713.500h42v2.500h-42z" fill="#76b9ed"/>
                <!-- remote desktop -->
                <path d="M383 686l17-1-2 15-14-1z" fill="#b9c8e8"/><path d="M384 687l13-.5-1 9-12-1z" fill="#3d56c8"/><path d="M380 691h16M380 695h14" stroke="#1930a8" stroke-width="2"/><path d="M380 690h16" stroke="#e8efff"/><ellipse cx="392" cy="703" rx="6" ry="3.500" fill="#c9ccd0"/><path d="M396 688l4-1-2 15-4-2z" fill="#7b7fae"/>
                <!-- edge -->
                <circle cx="436.500" cy="697" r="11" fill="#1b7ccb"/><path d="M426 695c1-13 22-12 22 1 0 6-8 7-10 4 2-5-4-9-8-7-2 0-3 1-4 2z" fill="#4bc98c"/><path d="M426 695c2-8 13-7 13 0-5-4-8 2-4 7 3 3 8 3 10 2-7 8-19 3-19-9z" fill="#1594d2"/><path d="M435 699c1 7 7 6 11 4l1-5c-4 4-9 3-9 0-2-2-3-1-3 1z" fill="#1b3e57"/>
                <!-- explorer -->
                <path d="M472 688h8l2 2h10v17h-20z" fill="#e8b33a"/><path d="M472 692h20v15h-20z" fill="#ffd875"/><path d="M475 698h15v9h-3v-5h-9v5h-3z" fill="#3b92cf"/>
                <!-- store -->
                <path d="M523 691v-4h10v4" fill="none" stroke="#28b4ef" stroke-width="1.800"/><path d="M517 690h22v15q0 3-3 3h-16q-3 0-3-3z" fill="#f4f5f6"/><path d="M523.500 695h4v4h-4z" fill="#e14c2b"/><path d="M528.500 695h4v4h-4z" fill="#72b53b"/><path d="M523.500 700h4v4h-4z" fill="#2c96d8"/><path d="M528.500 700h4v4h-4z" fill="#efb52f"/>
                <!-- mail -->
                <path d="M562 694l11.500-8 11.500 8v13h-23z" fill="#1c75bd"/><path d="M565 692h17v9h-17z" fill="#eef5fa"/><path d="M562 694l11.500 8 11.500-8v13h-23z" fill="#35a5e8"/>
                <!-- chrome -->
                <circle cx="620" cy="697" r="11" fill="#e9483b"/><path d="M610.500 691.500a11 11 0 0 0 8 16.400l6.500-8.400-9 0z" fill="#37a853"/><path d="M630 692a11 11 0 0 1-11.500 15.900l6.500-10.900-2-5z" fill="#fbc62f"/><circle cx="620" cy="697" r="5.200" fill="#4286ee" stroke="#fff" stroke-width="1.200"/>
                <!-- paint -->
                <ellipse cx="663" cy="698" rx="9.500" ry="8" fill="#dde9f2"/><circle cx="658" cy="695" r="2" fill="#e04d3f"/><circle cx="663" cy="693" r="2" fill="#efbb36"/><circle cx="657" cy="700" r="2" fill="#45ab5a"/><circle cx="663" cy="703" r="2" fill="#337fd1"/><path d="M675 687l-9 15" stroke="#c99357" stroke-width="3"/>
                <!-- power bi -->
                <path d="M712 686h8v22h-8z" fill="#d9981d"/><path d="M707 691h8v17h-8z" fill="#f0bd2c"/><path d="M701 697h8v11h-8z" fill="#f9dc74"/>
            </svg>
            <div class="tray">
                <svg width="24" height="18" viewBox="0 0 24 18" fill="none" stroke="#eee" stroke-width="1.400"><path d="M1 1h18v15H1zM19 4h3v12H1M4 5h12M4 8.500h5v4H4zM11 8.500h5M11 12.500h5"/></svg>
                <span class="temp">26°C</span><span class="weather">مشمس</span>
                <svg class="tray-icons" width="86" height="20" viewBox="0 0 86 20" fill="none" stroke="#eee" stroke-width="1.200"><path d="M1 13l5-6 5 6"/><path d="M27 7h9v7h-9zM37 9v3M23 4v3M26 4v3M22 7h5v3h-5zM24.500 10v5"/><path d="M28.500 9h3v3h-3z" fill="#eee"/><circle cx="52" cy="10" r="6.500"/><ellipse cx="52" cy="10" rx="3" ry="6.500"/><path d="M46 7.500h12M46 12.500h12"/><circle cx="56" cy="14" r="3" fill="#1d2b40"/><path d="M54 12l4 4M68 8h3l3-3v10l-3-3h-3zM76 8q1 2 0 4M78.500 6.500q2 3.500 0 7M81 5q3 5 0 10"/></svg>
                <span class="lang">ENG</span>
                <div class="clock">7:00 AM<br>5/17/2022</div>
                <svg class="notify" width="24" height="24" viewBox="0 0 24 24"><path d="M1 2h15v12H7l-3 3v-3H1z" fill="#fff"/><path d="M3 5.500h11M3 8.500h11M3 11.500h6" stroke="#23304a"/><circle cx="15" cy="16" r="6.500" fill="#3a4046" stroke="#888"/><text x="15" y="20" text-anchor="middle" font-size="11" fill="#fff">2</text></svg>
            </div>
        </footer>

        <div class="activate"><div>Activate Windows</div><p>Go to Settings to activate Windows.</p></div>
        <svg class="watermark" width="160" height="80" viewBox="560 634 160 80">
            <text class="wm-ar" x="563" y="672" textLength="154" lengthAdjust="spacingAndGlyphs">مستقل</text>
            <text class="wm-en" x="564" y="703" textLength="151" lengthAdjust="spacingAndGlyphs">mostaql.com</text>
        </svg>
    </div>
</body>
</html>
```
FILE: styles.css
```
* {
    margin: 0;
    padding: 0;
    box-sizing: border-box;
}

body {
    font-family: "Open Sans", "Noto Sans", "DejaVu Sans", sans-serif;
    background-color: #fff;
    overflow: hidden;
}

svg {
    flex-shrink: 0;
}

.desktop {
    position: relative;
    width: 1275px;
    height: 716px;
    display: flex;
    flex-direction: column;
    background-color: #f3f2f1;
}

/* title bar */
.titlebar {
    height: 32px;
    flex-shrink: 0;
    background-color: #3b3a38;
    color: #fff;
    display: flex;
    align-items: center;
    font-size: 12px;
    letter-spacing: -0.6px;
}

.quick-access {
    width: 170px;
    height: 32px;
}

.app-title {
    width: 289px;
    white-space: nowrap;
}

.search-box {
    width: 437px;
    height: 22px;
    background-color: #cfcdcb;
    border-radius: 2px;
    display: flex;
    align-items: center;
    gap: 10px;
    padding-left: 15px;
    color: #2c3555;
    font-size: 12.500px;
    letter-spacing: -0.2px;
}

.sign-in {
    width: 226px;
    padding-left: 183px;
    white-space: nowrap;
    letter-spacing: -0.4px;
}

.avatar {
    width: 15px;
    height: 15px;
    border-radius: 50%;
    background-color: #f3f2f1;
}

.window-buttons {
    margin-left: auto;
}

/* ribbon tabs */
.tabs {
    height: 29px;
    flex-shrink: 0;
    display: flex;
    font-size: 13px;
    letter-spacing: -0.3px;
    color: #484644;
}

.tab {
    text-align: center;
    line-height: 29px;
    white-space: nowrap;
}

.tab.active b {
    display: inline-block;
    height: 28px;
    font-weight: 600;
    border-bottom: 2px solid #e3bd23;
    color: #333;
}

.tab.context {
    background-color: #fff;
    color: #6d6033;
    font-weight: 600;
}

.w-file { width: 62px; }
.w-home { width: 63px; }
.w-insert { width: 63px; }
.w-modeling { width: 82px; }
.w-view { width: 60px; }
.w-help { width: 54px; }
.w-format { width: 71px; }
.w-drill { width: 93px; margin-left: 3px; }

/* ribbon */
.ribbon {
    height: 89px;
    flex-shrink: 0;
    display: flex;
    padding-top: 4px;
    border-bottom: 1px solid #e3e1df;
    font-size: 11.5px;
    letter-spacing: -0.65px;
    line-height: 15px;
    color: #3b3a39;
}

.group {
    display: flex;
    flex-direction: column;
    height: 83px;
    border-right: 1px solid #c8c6c4;
}

.g-clipboard { width: 150px; }
.g-data { width: 332px; padding-left: 5px; }
.g-queries { width: 110px; padding-left: 8px; }
.g-insert { width: 138px; padding-left: 9px; }
.g-calc { width: 107px; padding-left: 7px; }
.g-sens { width: 69px; }
.g-share { width: 55px; }

.tools {
    display: flex;
    height: 71px;
}

.tool {
    display: flex;
    flex-direction: column;
    align-items: center;
    text-align: center;
    white-space: nowrap;
    padding-top: 3px;
}

.tool > span {
    margin-top: 1px;
}

.w30 { width: 30px; }
.w33 { width: 33px; }
.w42 { width: 42px; }
.w43 { width: 43px; }
.w44 { width: 44px; }
.w45 { width: 45px; }
.w46 { width: 46px; }
.w48 { width: 48px; }
.w51 { width: 51px; }
.w52 { width: 52px; }
.w54 { width: 54px; }
.w68 { width: 68px; }

.w68 {
    letter-spacing: -0.3px;
}

.disabled {
    color: #a9a7a5;
}

.chev {
    display: inline-block;
    width: 4px;
    height: 4px;
    margin: 0 1px 3px 4px;
    border-right: 1px solid currentColor;
    border-bottom: 1px solid currentColor;
    transform: rotate(45deg);
}

.small-tools {
    display: flex;
    flex-direction: column;
    margin-left: -3px;
    white-space: nowrap;
    letter-spacing: -0.5px;
}

.small-tools div {
    display: flex;
    align-items: center;
    gap: 2px;
    height: 22.500px;
}

.caption {
    text-align: center;
    font-size: 9px;
    letter-spacing: -0.2px;
    line-height: 14px;
    color: #555;
}

.collapse {
    margin-left: auto;
    align-self: flex-end;
    margin-right: 4px;
    margin-bottom: 4px;
}

/* workspace */
.workspace {
    height: 505px;
    flex-shrink: 0;
    display: flex;
}

.rail {
    width: 39px;
    border-right: 1px solid #e1dfdd;
}

.editor {
    width: 1144px;
    display: flex;
    flex-direction: column;
}

.canvas {
    height: 473px;
    background-color: #fff;
    padding-left: 156px;
}

.report {
    width: 832px;
    height: 467px;
    border: 2px dotted #666;
    border-top: none;
}

.report-row {
    display: flex;
    height: 234px;
    margin-left: -1px;
}

.report-row.top {
    height: 230px;
}

.visual {
    display: block;
    overflow: visible;
}

.title {
    font-size: 11.5px;
    fill: #3c3c3c;
}

.axis {
    font-size: 7.5px;
    fill: #7b8080;
}

.axis-title {
    font-size: 9px;
    fill: #222;
}

.label {
    font-size: 9px;
    fill: #333;
}

.legend {
    font-size: 8.500px;
    fill: #605e5c;
}

.cat {
    font-size: 7.5px;
    fill: #777;
}

.tile {
    font-size: 8.500px;
    font-weight: 600;
    fill: #fff;
}

.grid {
    stroke: #e8e8e8;
    stroke-dasharray: 1 4;
    fill: none;
}

.kpi {
    font-family: Roboto, sans-serif;
    font-size: 35px;
    fill: #222;
    stroke: #222;
    stroke-width: 0.6;
}

/* table visual */
.table-visual {
    width: 177px;
    padding: 5px 2px 0 4px;
    display: flex;
    flex-direction: column;
}

table {
    width: 171px;
    table-layout: fixed;
    border-spacing: 0;
    font-size: 8.500px;
    color: #333;
}

th,
td {
    height: 12.300px;
    line-height: 12px;
    white-space: nowrap;
    text-align: left;
    padding-left: 3px;
}

th {
    height: 18px;
    font-weight: 400;
    border-bottom: 1px solid #7cbcf2;
}

td {
    border-right: 1px solid #7cbcf2;
}

th:first-child {
    width: 120px;
}

td.num {
    border-right: none;
    padding-left: 12px;
    letter-spacing: -0.45px;
    font-size: 9px;
}

td.zero {
    padding-left: 46px;
}

th.num {
    padding-left: 4px;
}

tbody tr:nth-child(even) td {
    background-color: #ececec;
}

.total td {
    font-weight: 600;
}

.total td.num {
    padding-left: 4px;
}

.hscroll {
    margin-top: auto;
    margin-bottom: 9px;
    height: 11px;
    display: flex;
    align-items: center;
    justify-content: space-around;
    font-size: 11px;
    color: #555;
}

.hscroll div {
    width: 135px;
    height: 5px;
    background-color: #cdcdcd;
}

/* page tabs */
.page-tabs {
    height: 32px;
    display: flex;
}

.arrows {
    width: 37px;
    display: flex;
    justify-content: space-between;
    align-items: center;
    padding: 0 5px 0 2px;
    font-size: 7px;
    color: #bdbbb9;
    border-right: 1px solid #d9d7d5;
}

.page-tab {
    width: 70px;
    height: 32px;
    background-color: #fff;
    border-bottom: 3px solid #e9c62d;
    font-size: 12px;
    letter-spacing: -0.6px;
    line-height: 32px;
    text-align: center;
    color: #252423;
}

.add-page {
    width: 37px;
    height: 30px;
    margin-top: 1px;
    background-color: #f2c811;
    text-align: center;
    font-size: 19px;
    font-weight: 700;
    line-height: 29px;
    color: #72641f;
}

/* side panes */
.pane {
    display: flex;
    flex-direction: column;
    align-items: center;
    font-size: 13.500px;
    font-weight: 600;
    letter-spacing: 0.2px;
    color: #252423;
    padding-top: 9px;
}

.pane span {
    writing-mode: vertical-rl;
    line-height: 16px;
}

.filters {
    width: 30px;
    height: 473px;
    background-color: #fff;
    border-left: 1px solid #bbb;
}

.funnel {
    margin: 17px 0 6px 3px;
}

.visualizations {
    width: 32px;
    padding-top: 6px;
    border: solid #e6e4e2;
    border-width: 0 1px;
}

.focus-ring {
    width: 17px;
    height: 493px;
    border: 2px solid #111;
    border-radius: 3px;
    padding-top: 3px;
    display: flex;
    flex-direction: column;
    align-items: center;
    gap: 13px;
}

.fields {
    width: 30px;
    gap: 13px;
    padding-top: 11px;
}

/* status bar */
.status {
    height: 23px;
    padding-left: 5px;
    line-height: 22px;
    font-size: 11px;
    letter-spacing: -0.2px;
    color: #484644;
    border-top: 1px solid #d9d7d5;
    border-bottom: 1px solid #d0d0d0;
}

/* taskbar */
.taskbar {
    height: 38px;
    display: flex;
    background: linear-gradient(90deg, #1f333c 0%, #20343e 55%, #1b2941 78%, #1a2340 100%);
    color: #f2f2f2;
}

.start {
    width: 45px;
    display: flex;
    align-items: center;
    justify-content: center;
}

.task-search {
    width: 320px;
    background-color: #f2f2f2;
    display: flex;
    align-items: center;
    gap: 11px;
    padding-left: 10px;
    font-size: 13.500px;
    letter-spacing: -0.3px;
    color: #333;
}

.tray {
    display: flex;
    align-items: center;
    margin-left: 185px;
    font-size: 12px;
    letter-spacing: -0.5px;
}

.temp {
    margin-left: 6px;
    width: 36px;
    font-size: 13px;
}

.weather {
    width: 41px;
    font-size: 12px;
    text-align: center;
    letter-spacing: 0;
}

.tray-icons {
    margin-left: 15px;
}

.lang {
    margin-left: 4px;
    width: 32px;
}

.clock {
    width: 52px;
    font-size: 11px;
    line-height: 17px;
    text-align: center;
    white-space: nowrap;
}

.notify {
    margin-left: 15px;
}

/* overlays */
.activate {
    position: absolute;
    left: 1001px;
    top: 606px;
    color: #b9b9b9;
    white-space: nowrap;
}

.activate div {
    font-size: 17.800px;
    line-height: 22px;
}

.activate p {
    font-size: 13.300px;
    line-height: 20px;
}

.watermark {
    position: absolute;
    left: 560px;
    top: 634px;
}

.wm-ar {
    font-family: "DejaVu Sans", sans-serif;
    font-size: 44px;
    fill: rgba(150, 150, 150, 0.3);
    stroke: rgba(150, 150, 150, 0.3);
    stroke-width: 1.5;
}

.wm-en {
    font-size: 23px;
    font-weight: 600;
    fill: rgba(190, 190, 190, 0.5);
}
```
